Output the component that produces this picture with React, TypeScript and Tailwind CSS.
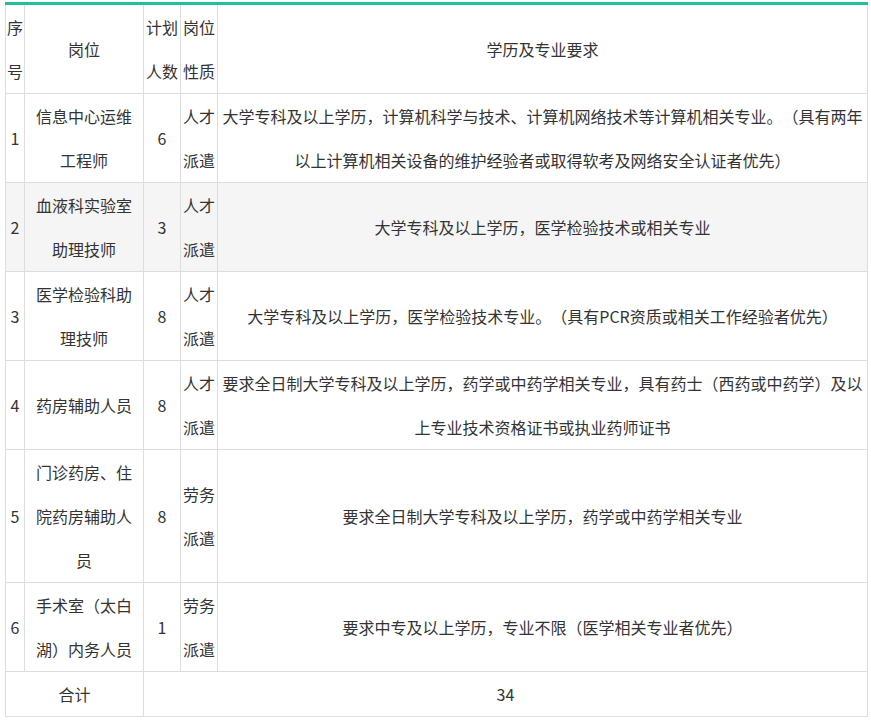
import React from "react";

const rows = [
  ["1", "信息中心运维工程师", "6", "人才派遣", "大学专科及以上学历，计算机科学与技术、计算机网络技术等计算机相关专业。（具有两年以上计算机相关设备的维护经验者或取得软考及网络安全认证者优先）", false],
  ["2", "血液科实验室助理技师", "3", "人才派遣", "大学专科及以上学历，医学检验技术或相关专业", true],
  ["3", "医学检验科助理技师", "8", "人才派遣", "大学专科及以上学历，医学检验技术专业。（具有PCR资质或相关工作经验者优先）", false],
  ["4", "药房辅助人员", "8", "人才派遣", "要求全日制大学专科及以上学历，药学或中药学相关专业，具有药士（西药或中药学）及以上专业技术资格证书或执业药师证书", false],
  ["5", "门诊药房、住院药房辅助人员", "8", "劳务派遣", "要求全日制大学专科及以上学历，药学或中药学相关专业", false],
  ["6", "手术室（太白湖）内务人员", "1", "劳务派遣", "要求中专及以上学历，专业不限（医学相关专业者优先）", false],
] as const;

const td = "border border-[#dddddd] text-center align-middle p-0";

export default function App() {
  return (
    <div className="bg-white w-[871px] h-[722px] pt-[2px] pl-[5px] [text-spacing-trim:space-all]" style={{ fontFamily: '"Microsoft YaHei","Noto Sans CJK SC",sans-serif' }}>
      <table className="border-collapse table-fixed w-[863px] text-[16px] leading-[44px] text-[#333333] border-t-[3px] border-t-[#1fbf9f]">
        <colgroup>
          <col className="w-[19px]" />
          <col className="w-[119px]" />
          <col className="w-[37px]" />
          <col className="w-[37px]" />
          <col />
        </colgroup>
        <tbody>
          <tr className="h-[89px]">
            <td className={td}>序号</td>
            <td className={td}>岗位</td>
            <td className={td}>计划人数</td>
            <td className={td}>岗位性质</td>
            <td className={td}>学历及专业要求</td>
          </tr>
          {rows.map((r) => (
            <tr key={r[0]} className={r[5] ? "bg-[#f5f5f5]" : ""}>
              <td className={td}>{r[0]}</td>
              <td className={td + " px-[5px]"}>{r[1]}</td>
              <td className={td}>{r[2]}</td>
              <td className={td}>{r[3]}</td>
              <td className={td + " px-[1px]"}>{r[4]}</td>
            </tr>
          ))}
          <tr className="h-[45px]">
            <td className={td} colSpan={2}>合计</td>
            <td className={td} colSpan={3}>34</td>
          </tr>
        </tbody>
      </table>
    </div>
  );
}
